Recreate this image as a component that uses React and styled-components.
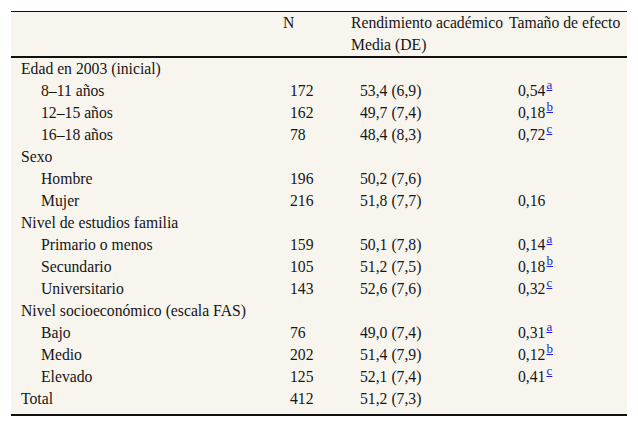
import React from 'react';
import styled, { createGlobalStyle } from 'styled-components';

const GlobalStyle = createGlobalStyle`
  html, body {
    margin: 0;
    padding: 0;
    background: #ffffff;
  }
`;

const Wrapper = styled.div`
  padding: 11px 11px 0 11px;
  font-family: 'Times New Roman', 'Liberation Serif', serif;
  font-size: 15.7px;
  color: #161616;
`;

const Table = styled.table`
  width: 616px;
  border-collapse: collapse;
  table-layout: fixed;
  background: #f8f5ef;
  border-top: 1px solid #111;
  border-bottom: 2px solid #111;
`;

const HeadRow = styled.tr`
  border-bottom: 2px solid #111;
`;

const Th = styled.th`
  font-weight: normal;
  text-align: left;
  vertical-align: top;
  line-height: 22px;
  padding: 0 0 0 4px;
  white-space: nowrap;
`;

const Row = styled.tr`
  height: 22px;
`;

const LabelCell = styled.td`
  line-height: 22px;
  padding: 0 0 0 ${p => (p.$indent ? 30 : 10)}px;
  white-space: nowrap;
`;

const NumCell = styled.td`
  line-height: 22px;
  padding: 0 0 0 ${p => p.$pad}px;
  white-space: nowrap;
`;

const Spacer = styled.tr`
  height: 5px;
`;

const Note = styled.a`
  font-size: 13px;
  color: #1a1ae6;
  text-decoration: underline;
  vertical-align: 7px;
  line-height: 0;
  margin-left: 1px;
`;

const rows = [
  { label: 'Edad en 2003 (inicial)' },
  { label: '8–11 años', n: '172', m: '53,4 (6,9)', e: '0,54', s: 'a' },
  { label: '12–15 años', n: '162', m: '49,7 (7,4)', e: '0,18', s: 'b' },
  { label: '16–18 años', n: '78', m: '48,4 (8,3)', e: '0,72', s: 'c' },
  { label: 'Sexo' },
  { label: 'Hombre', n: '196', m: '50,2 (7,6)' },
  { label: 'Mujer', n: '216', m: '51,8 (7,7)', e: '0,16' },
  { label: 'Nivel de estudios familia' },
  { label: 'Primario o menos', n: '159', m: '50,1 (7,8)', e: '0,14', s: 'a' },
  { label: 'Secundario', n: '105', m: '51,2 (7,5)', e: '0,18', s: 'b' },
  { label: 'Universitario', n: '143', m: '52,6 (7,6)', e: '0,32', s: 'c' },
  { label: 'Nivel socioeconómico (escala FAS)' },
  { label: 'Bajo', n: '76', m: '49,0 (7,4)', e: '0,31', s: 'a' },
  { label: 'Medio', n: '202', m: '51,4 (7,9)', e: '0,12', s: 'b' },
  { label: 'Elevado', n: '125', m: '52,1 (7,4)', e: '0,41', s: 'c' },
  { label: 'Total', n: '412', m: '51,2 (7,3)', top: true },
];

export default function App() {
  return (
    <Wrapper>
      <GlobalStyle />
      <Table>
        <colgroup>
          <col style={{ width: 268 }} />
          <col style={{ width: 68 }} />
          <col style={{ width: 158 }} />
          <col style={{ width: 122 }} />
        </colgroup>
        <thead>
          <HeadRow>
            <Th />
            <Th>N</Th>
            <Th>Rendimiento académico<br />Media (DE)</Th>
            <Th>Tamaño de efecto</Th>
          </HeadRow>
        </thead>
        <tbody>
          {rows.map((r, i) => {
            const group = !r.n || r.top;
            return (
              <Row key={i}>
                <LabelCell $indent={!group}>{r.label}</LabelCell>
                <NumCell $pad={11}>{r.n}</NumCell>
                <NumCell $pad={13}>{r.m}</NumCell>
                <NumCell $pad={13}>
                  {r.e}
                  {r.s && <Note href="#">{r.s}</Note>}
                </NumCell>
              </Row>
            );
          })}
          <Spacer><td colSpan={4} /></Spacer>
        </tbody>
      </Table>
    </Wrapper>
  );
}
